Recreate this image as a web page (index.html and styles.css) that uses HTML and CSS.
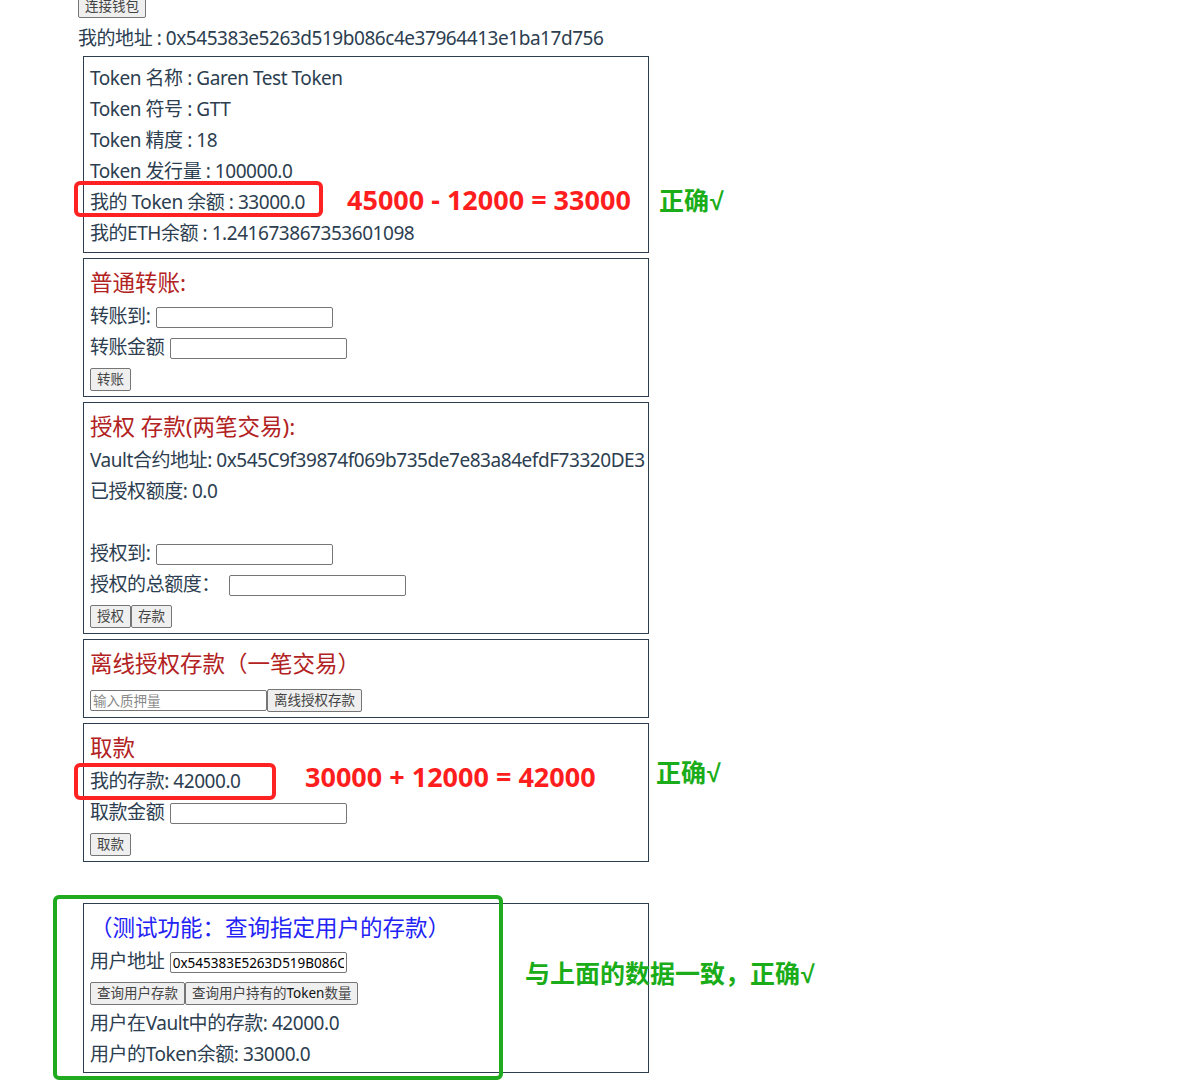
FILE: index.html
```html
<!DOCTYPE html>
<html lang="zh-CN">
<head>
<meta charset="utf-8">
<title>Vault</title>
<link rel="stylesheet" href="styles.css">
</head>
<body>
<div class="page">
  <div class="app">
    <button class="btn btn-top">连接钱包</button>
    <div class="addr">我的地址 : 0x545383e5263d519b086c4e37964413e1ba17d756</div>

    <div class="box box-token">
      <div class="line">Token 名称 : Garen Test Token</div>
      <div class="line">Token 符号 : GTT</div>
      <div class="line">Token 精度 : 18</div>
      <div class="line">Token 发行量 : 100000.0</div>
      <div class="line">我的 Token 余额 : 33000.0</div>
      <div class="line">我的ETH余额 : 1.241673867353601098</div>
    </div>

    <div class="box">
      <div class="title">普通转账:</div>
      <div class="line">转账到: <input class="field" type="text"></div>
      <div class="line">转账金额 <input class="field" type="text"></div>
      <div class="line"><button class="btn">转账</button></div>
    </div>

    <div class="box">
      <div class="title">授权 存款(两笔交易):</div>
      <div class="line">Vault合约地址: 0x545C9f39874f069b735de7e83a84efdF73320DE3</div>
      <div class="line">已授权额度: 0.0</div>
      <div class="line"></div>
      <div class="line">授权到: <input class="field" type="text"></div>
      <div class="line">授权的总额度： <input class="field field-wide-gap" type="text"></div>
      <div class="line"><button class="btn">授权</button><button class="btn">存款</button></div>
    </div>

    <div class="box">
      <div class="title">离线授权存款（一笔交易）</div>
      <div class="line line-offline"><input class="field" type="text" placeholder="输入质押量"><button class="btn">离线授权存款</button></div>
    </div>

    <div class="box">
      <div class="title">取款</div>
      <div class="line">我的存款: 42000.0</div>
      <div class="line">取款金额 <input class="field" type="text"></div>
      <div class="line"><button class="btn">取款</button></div>
    </div>

    <div class="box box-test">
      <div class="title title-blue">（测试功能：查询指定用户的存款）</div>
      <div class="line">用户地址 <input class="field field-dark" type="text" value="0x545383E5263D519B086C4e37964413e1ba17d756"></div>
      <div class="line"><button class="btn">查询用户存款</button><button class="btn">查询用户持有的<span class="btn-strong">Token</span>数量</button></div>
      <div class="line">用户在Vault中的存款: 42000.0</div>
      <div class="line">用户的Token余额: 33000.0</div>
    </div>
  </div>

  <div class="mark mark-red mark-balance"></div>
  <div class="note note-red note-balance">45000 - 12000 = 33000</div>
  <div class="note note-green note-ok1">正确<span class="tick">√</span></div>

  <div class="mark mark-red mark-deposit"></div>
  <div class="note note-red note-deposit">30000 + 12000 = 42000</div>
  <div class="note note-green note-ok2">正确<span class="tick">√</span></div>

  <div class="mark mark-green mark-test"></div>
  <div class="note note-green note-ok3">与上面的数据一致，正确<span class="tick">√</span></div>
</div>
</body>
</html>
```

FILE: styles.css
```css
html, body {
  margin: 0;
  padding: 0;
  background: #ffffff;
}

body {
  font-family: "Noto Sans", "Noto Sans CJK SC", sans-serif;
  font-size: 19px;
  color: #2c3e50;
}

.page {
  position: relative;
  display: flow-root;
  width: 1184px;
  min-height: 1080px;
  overflow: hidden;
}

.app {
  padding-left: 78px;
}

.btn {
  font-family: "Noto Sans", "Noto Sans CJK SC", sans-serif;
  font-size: 13.5px;
  line-height: 19px;
  height: 23px;
  padding: 1px 6px;
  margin: 0;
  border: 1px solid #767676;
  border-radius: 2px;
  background: #efefef;
  color: #444;
  letter-spacing: normal;
  vertical-align: middle;
  box-sizing: border-box;
}

.btn-strong {
  color: #111;
}

.btn-top {
  display: block;
  margin-top: -5px;
}

.addr {
  margin-top: 7px;
  line-height: 26px;
  height: 26px;
  letter-spacing: -0.45px;
  white-space: nowrap;
}

.box {
  width: 566px;
  box-sizing: border-box;
  margin: 5px 0 5px 5px;
  padding: 6px 6px 2px;
  border: 1px solid #2c3e50;
}

.box-token {
  padding-bottom: 3px;
}

.box-test {
  margin-top: 41px;
}

.title {
  font-size: 22.5px;
  line-height: 36px;
  height: 36px;
  color: #b22222;
  white-space: nowrap;
}

.title-blue {
  color: #2323f5;
}

.line {
  line-height: 31px;
  height: 31px;
  letter-spacing: -0.45px;
  white-space: nowrap;
}

.line-offline {
  padding-top: 2px;
}

.field {
  width: 177px;
  height: 21px;
  box-sizing: border-box;
  padding: 1px 2px;
  margin: 0 0 0 1px;
  border: 1px solid #767676;
  border-radius: 2px;
  font-family: "Noto Sans", "Noto Sans CJK SC", sans-serif;
  font-size: 13.5px;
  letter-spacing: normal;
  color: #111;
  background: #fff;
  vertical-align: middle;
}

.line-offline .field {
  margin-left: 0;
}

.field-wide-gap {
  margin-left: 5px;
}

.field::placeholder {
  color: #8a8a8a;
}

.field-dark {
  color: #000;
}

/* annotations drawn over the screenshot */
.mark {
  position: absolute;
  box-sizing: border-box;
  border-radius: 6px;
}

.mark-red {
  border: 4px solid #ff2222;
}

.mark-green {
  border: 4px solid #1faa1f;
}

.mark-balance {
  left: 74px;
  top: 181px;
  width: 249px;
  height: 36px;
}

.mark-deposit {
  left: 74px;
  top: 763px;
  width: 202px;
  height: 37px;
}

.mark-test {
  left: 53px;
  top: 895px;
  width: 450px;
  height: 185px;
}

.note {
  position: absolute;
  font-weight: 700;
  white-space: nowrap;
  line-height: 34px;
}

.note-red {
  font-family: "Noto Sans", "Noto Sans CJK SC", sans-serif;
  font-size: 27px;
  color: #ff1e1e;
}

.note-green {
  font-family: "Noto Sans CJK SC", sans-serif;
  font-size: 25px;
  color: #1aad19;
}

.tick {
  font-family: "Liberation Sans", sans-serif;
  font-weight: 700;
  margin-left: 1px;
}

.note-balance {
  left: 347px;
  top: 183px;
}

.note-ok1 {
  left: 659px;
  top: 182px;
}

.note-deposit {
  left: 305px;
  top: 760px;
}

.note-ok2 {
  left: 656px;
  top: 754px;
}

.note-ok3 {
  left: 525px;
  top: 955px;
}
```
